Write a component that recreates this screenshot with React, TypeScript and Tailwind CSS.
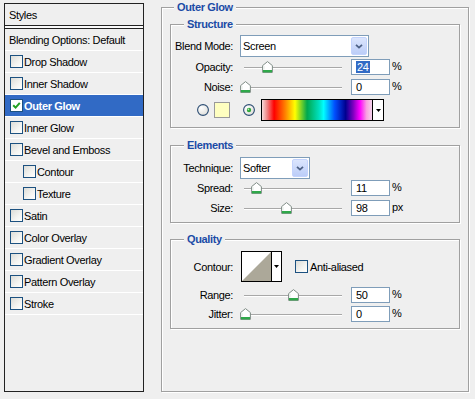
import React from 'react';

function CheckBox({ checked = false }: { checked?: boolean }) {
  return (
    <span
      className={`w-[13px] h-[13px] shrink-0 border border-[#1c5180] flex items-center justify-center ${
        checked ? 'bg-white' : 'bg-[linear-gradient(135deg,#dcdcd7_0%,#f4f4f1_60%,#ffffff_100%)]'
      }`}
    >
      {checked && (
        <svg width="9" height="9" viewBox="0 0 9 9">
          <path d="M1.2 4.2 L3.6 6.6 L7.8 1.8" stroke="#21a121" strokeWidth="2" fill="none" />
        </svg>
      )}
    </span>
  );
}

function Radio({ checked = false }: { checked?: boolean }) {
  return (
    <svg width="12" height="12" viewBox="0 0 12 12" className="shrink-0">
      <defs>
        <radialGradient id={checked ? 'rg1' : 'rg0'} cx="0.35" cy="0.3" r="0.8">
          <stop offset="0" stopColor="#ffffff" />
          <stop offset="1" stopColor="#dcdcd7" />
        </radialGradient>
      </defs>
      <circle cx="6" cy="6" r="5.4" fill={`url(#${checked ? 'rg1' : 'rg0'})`} stroke="#2c4d73" strokeWidth="1.1" />
      {checked && <circle cx="6" cy="6" r="2.2" fill="#2fa83a" />}
      {checked && <circle cx="5.4" cy="5.4" r="0.8" fill="#b8ecb8" />}
    </svg>
  );
}

function Chevron() {
  return (
    <svg width="8" height="5" viewBox="0 0 8 5">
      <path d="M1 0.8 L4 3.6 L7 0.8" stroke="#4d6185" strokeWidth="1.8" fill="none" />
    </svg>
  );
}

function Select({ w, value }: { w: string; value: string }) {
  return (
    <div className={`h-[22px] ${w} border border-[#7f9db9] bg-white flex items-center`}>
      <span className="flex-1 pl-[2px] leading-[14px]">{value}</span>
      <span className="w-[16px] h-[18px] mr-px rounded-[2px] border border-[#c3d3fd] bg-[linear-gradient(#dbe5fd,#bccdf8)] flex items-center justify-center">
        <Chevron />
      </span>
    </div>
  );
}

function Thumb({ left }: { left: number }) {
  return (
    <svg width="11" height="12" viewBox="0 0 11 12" className="absolute top-[2px]" style={{ left }}>
      <path d="M5.5 0.6 L10.4 4.6 L10.4 11.4 L0.6 11.4 L0.6 4.6 Z" fill="#ffffff" stroke="#7f8c86" strokeWidth="1" />
      <rect x="1" y="9" width="9" height="2.4" fill="#2fa84a" />
      <path d="M2 5 L2 8.5" stroke="#e4ece6" strokeWidth="1" />
    </svg>
  );
}

function SliderRow({
  label,
  thumb,
  value,
  unit,
  mt,
  selected = false,
}: {
  label: string;
  thumb: number;
  value: string;
  unit: string;
  mt: string;
  selected?: boolean;
}) {
  return (
    <div className={`flex items-center h-[16px] ${mt}`}>
      <span className="w-[62px] text-right leading-[14px]">{label}</span>
      <div className="ml-[7px] w-[108px] h-full relative flex items-center">
        <div className="ml-[4px] mt-[2px] w-[98px] h-[2px] border-t border-[#a8a8a8] border-b border-b-white" />
        <Thumb left={thumb} />
      </div>
      <div className="ml-[3px] w-[39px] h-[16px] border border-[#7f9db9] bg-white pl-[4px] flex items-center leading-[12px]">
        {selected ? <span className="bg-[#316ac5] text-white px-px">{value}</span> : <span>{value}</span>}
      </div>
      <span className="ml-[2px] leading-[14px] -mt-[2px]">{unit}</span>
    </div>
  );
}

function Legend({ children, ml }: { children: React.ReactNode; ml: string }) {
  return (
    <legend className={`${ml} px-[3px] leading-[14px] font-bold text-[#1b4ba6] bg-[#efefef]`}>{children}</legend>
  );
}

const GROUP =
  'border border-[#a0a0a0] shadow-[inset_1px_1px_0_#ffffff,1px_1px_0_#ffffff] m-0 p-0 min-w-0';

const items: { label: string; indent?: boolean; selected?: boolean }[] = [
  { label: 'Drop Shadow' },
  { label: 'Inner Shadow' },
  { label: 'Outer Glow', selected: true },
  { label: 'Inner Glow' },
  { label: 'Bevel and Emboss' },
  { label: 'Contour', indent: true },
  { label: 'Texture', indent: true },
  { label: 'Satin' },
  { label: 'Color Overlay' },
  { label: 'Gradient Overlay' },
  { label: 'Pattern Overlay' },
  { label: 'Stroke' },
];

export default function App() {
  return (
    <div className="w-[475px] h-[399px] bg-[#efefef] flex font-['Liberation_Sans',Arial,sans-serif] text-[11px] tracking-[-0.35px] text-black overflow-hidden">
      {/* Left styles list */}
      <div className="mt-[3px] ml-[4px] w-[140px] h-[389px] border border-[#222222] flex flex-col">
        <div className="h-[22px] pl-[4px] flex items-center border-b border-[#222222] leading-[14px]">Styles</div>
        <div className="h-[2px] bg-[#fafafa]" />
        <div className="h-[23px] pl-[4px] flex items-center border-t border-[#222222] border-b border-b-white leading-[14px]">
          Blending Options: Default
        </div>
        {items.map((it) => (
          <div
            key={it.label}
            className={`h-[22px] flex items-center border-b border-white ${it.indent ? 'pl-[18px]' : 'pl-[5px]'} ${
              it.selected ? 'bg-[#316ac5] text-white font-bold' : ''
            }`}
          >
            <CheckBox checked={it.selected} />
            <span className="ml-px leading-[14px]">{it.label}</span>
          </div>
        ))}
      </div>

      {/* Right: Outer Glow */}
      <fieldset className={`${GROUP} ml-[17px] w-[308px] h-[392px] px-[8px]`}>
        <Legend ml="ml-[4px]">Outer Glow</Legend>

        {/* Structure */}
        <fieldset className={`${GROUP} mt-[3px] h-[111px]`}>
          <Legend ml="ml-[13px]">Structure</Legend>
          <div className="flex items-center h-[22px] mt-[4px]">
            <span className="w-[62px] text-right leading-[14px]">Blend Mode:</span>
            <div className="ml-[7px]">
              <Select w="w-[129px]" value="Screen" />
            </div>
          </div>
          <SliderRow label="Opacity:" thumb={22} value="24" unit="%" mt="mt-[2px]" selected />
          <SliderRow label="Noise:" thumb={0} value="0" unit="%" mt="mt-[4px]" />
          <div className="flex items-center h-[22px] mt-[4px]">
            <span className="ml-[26px]">
              <Radio />
            </span>
            <span className="ml-[5px] w-[16px] h-[16px] border border-[#9a9a9a] bg-[#ffffc0]" />
            <span className="ml-[13px]">
              <Radio checked />
            </span>
            <div className="ml-[6px] w-[123px] h-[22px] border border-black flex">
              <div className="flex-1 bg-[linear-gradient(to_right,#f6dcdc_0%,#f08080_5%,#ff0000_11%,#ff8000_21%,#ffff00_30%,#00a84e_41%,#00e0c0_52%,#00ffff_56%,#0050ff_66%,#000090_76%,#8000c0_83%,#ff00ff_89%,#f8a0e0_95%,#f4d4ec_100%)]" />
              <div className="w-[11px] border-l border-black bg-white flex items-center justify-center">
                <svg width="5" height="3" viewBox="0 0 5 3">
                  <path d="M0 0 L5 0 L2.5 3 Z" fill="#000" />
                </svg>
              </div>
            </div>
          </div>
        </fieldset>

        {/* Elements */}
        <fieldset className={`${GROUP} mt-[10px] h-[85px]`}>
          <Legend ml="ml-[13px]">Elements</Legend>
          <div className="flex items-center h-[22px] mt-[5px]">
            <span className="w-[62px] text-right leading-[14px]">Technique:</span>
            <div className="ml-[7px]">
              <Select w="w-[70px]" value="Softer" />
            </div>
          </div>
          <SliderRow label="Spread:" thumb={11} value="11" unit="%" mt="mt-[1px]" />
          <SliderRow label="Size:" thumb={41} value="98" unit="px" mt="mt-[4px]" />
        </fieldset>

        {/* Quality */}
        <fieldset className={`${GROUP} mt-[9px] h-[97px]`}>
          <Legend ml="ml-[13px]">Quality</Legend>
          <div className="flex items-center h-[31px] mt-[5px]">
            <span className="w-[62px] text-right leading-[14px]">Contour:</span>
            <div className="ml-[8px] w-[41px] h-[31px] border border-black flex bg-white">
              <svg width="29" height="29" viewBox="0 0 29 29" className="shrink-0">
                <rect width="29" height="29" fill="#ffffff" />
                <polygon points="0,29 29,0 29,29" fill="#aca899" />
              </svg>
              <div className="flex-1 border-l border-black flex items-center justify-center">
                <svg width="5" height="3" viewBox="0 0 5 3">
                  <path d="M0 0 L5 0 L2.5 3 Z" fill="#000" />
                </svg>
              </div>
            </div>
            <span className="ml-[13px]">
              <CheckBox />
            </span>
            <span className="ml-[2px] leading-[14px]">Anti-aliased</span>
          </div>
          <SliderRow label="Range:" thumb={48} value="50" unit="%" mt="mt-[5px]" />
          <SliderRow label="Jitter:" thumb={0} value="0" unit="%" mt="mt-[3px]" />
        </fieldset>
      </fieldset>
    </div>
  );
}
